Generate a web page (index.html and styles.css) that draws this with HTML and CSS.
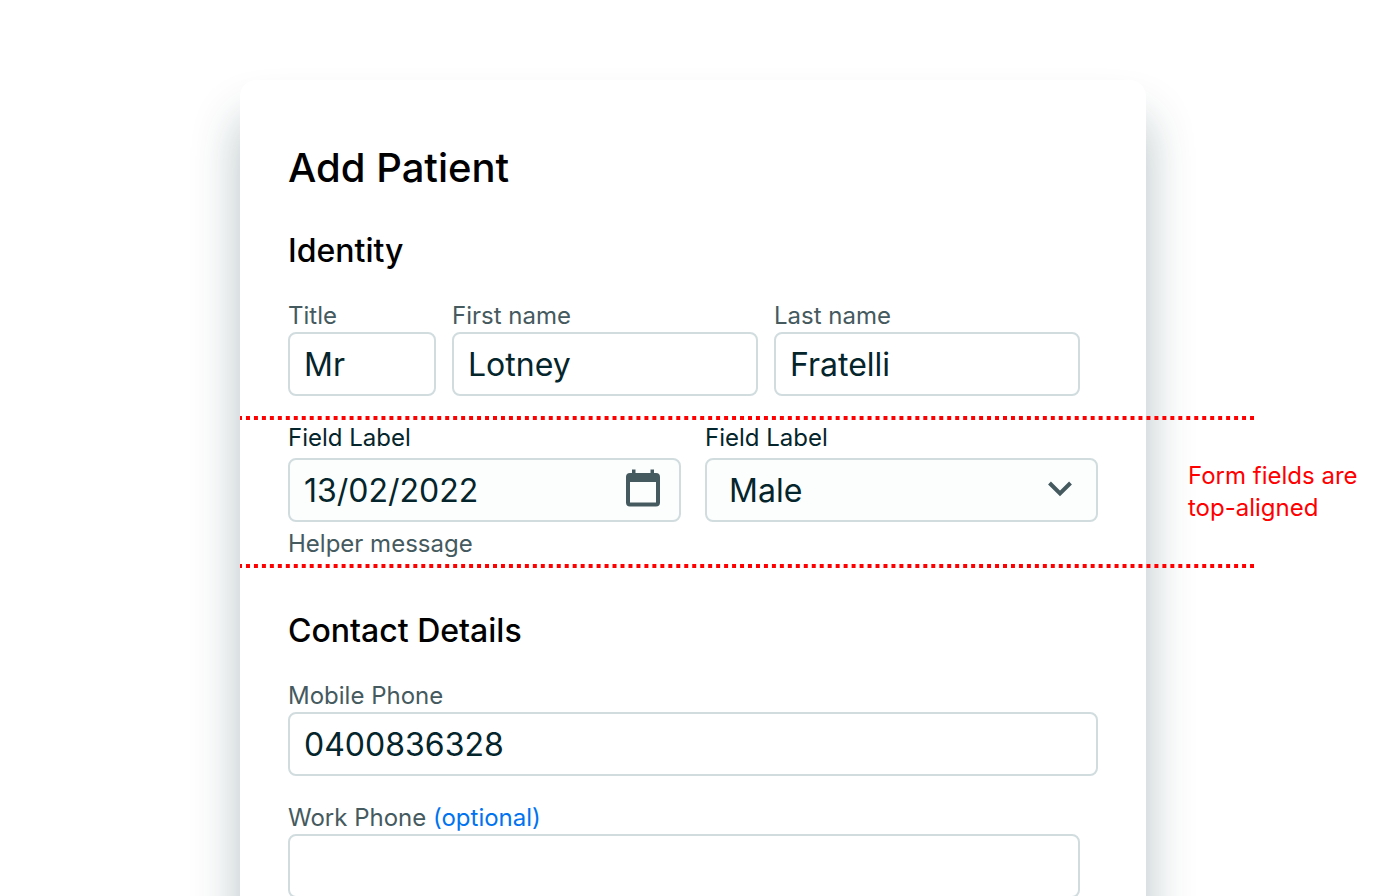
FILE: index.html
```
<!DOCTYPE html>
<html lang="en">
<head>
  <meta charset="UTF-8" />
  <meta name="viewport" content="width=device-width, initial-scale=1" />
  <title>Add Patient</title>
  <link rel="stylesheet" href="styles.css">
</head>
<body>

  <main class="card">
    <h1>Add Patient</h1>

    <form>
      <h2>Identity</h2>
      <div class="row name-row">
        <div class="field">
          <label for="title">Title</label>
          <input type="text" id="title" value="Mr">
        </div>
        <div class="field">
          <label for="first-name">First name</label>
          <input type="text" id="first-name" value="Lotney">
        </div>
        <div class="field">
          <label for="last-name">Last name</label>
          <input type="text" id="last-name" value="Fratelli">
        </div>
      </div>

      <!-- fields between the guide lines -->
      <div class="guides">
        <div class="row guide-row">
          <div class="field">
            <label for="dob">Field Label</label>
            <div class="control">
              <input type="text" id="dob" value="13/02/2022" aria-describedby="dob-help">
              <button type="button" class="calendar" aria-label="Choose date">
                <svg width="36" height="38" viewBox="0 0 36 38" fill="#455a5e">
                  <path fill-rule="evenodd" d="M7 .5h3.500V4h15V.5H29V4h2a4 4 0 0 1 4 4v25.500a4 4 0 0 1-4 4H5a4 4 0 0 1-4-4V8a4 4 0 0 1 4-4h2zM5 13v20.500h26V13z"/>
                </svg>
              </button>
            </div>
            <p class="helper" id="dob-help">Helper message</p>
          </div>
          <div class="field">
            <label for="gender">Field Label</label>
            <div class="control">
              <select id="gender">
                <option>Male</option>
                <option>Female</option>
              </select>
              <svg class="chevron" width="24" height="16" viewBox="0 0 24 16" fill="none" stroke="#455a5e" stroke-width="4">
                <path d="M1.500 2L12 12.500 22.500 2"/>
              </svg>
            </div>
          </div>
        </div>
        <p class="note">Form fields are top-aligned</p>
      </div>

      <h2>Contact Details</h2>
      <div class="field">
        <label for="mobile">Mobile Phone</label>
        <input type="tel" id="mobile" value="0400836328">
      </div>
      <div class="field work">
        <label for="work">Work Phone <span class="optional">(optional)</span></label>
        <input type="tel" id="work">
      </div>
    </form>
  </main>

</body>
</html>
```

FILE: styles.css
```
* {
  box-sizing: border-box;
}

html {
  overflow: hidden;
}

body {
  margin: 0;
  padding: 80px 240px 0;
  background: #fff;
  color: #000;
  font-family: Inter, sans-serif;
}

.card {
  min-height: 100vh;
  padding: 64px 48px 96px;
  background: #fff;
  border-radius: 16px;
  box-shadow: 0 38px 48px rgba(12, 52, 62, 0.3);
}

h1, h2, p {
  margin: 0;
}

h1 {
  margin-bottom: 40px;
  font-size: 40px;
  line-height: 48px;
  font-weight: 500;
}

h2 {
  margin-bottom: 30px;
  font-size: 32px;
  line-height: 38px;
  font-weight: 500;
}

.row {
  display: grid;
}

.name-row {
  grid-template-columns: 148px 1fr 1fr;
  gap: 16px;
  margin-right: 18px;
}

.field {
  min-width: 0;
}

label {
  display: block;
  color: #455a5e;
  font-size: 24px;
  line-height: 32px;
}

input, select {
  display: block;
  width: 100%;
  height: 64px;
  padding: 0 14px;
  border: 2px solid #d1dcde;
  border-radius: 8px;
  background: #fff;
  color: #04252b;
  font-family: inherit;
  font-size: 32px;
}

/* dotted lines run past the right edge of the card */
.guides {
  position: relative;
  margin: 20px -156px 44px -48px;
  padding: 6px 156px 8px 48px;
}

.guides::before,
.guides::after {
  content: "";
  position: absolute;
  left: 0;
  right: 0;
  height: 4px;
  background-image: linear-gradient(90deg, #f00 25%, transparent 25% 75%, #f00 75%);
  background-size: 8px 4px;
  background-repeat: round no-repeat;
}

.guides::before {
  top: 0;
}

.guides::after {
  bottom: 0;
}

.guide-row {
  grid-template-columns: 1fr 1fr;
  gap: 24px;
}

.guide-row label {
  margin-bottom: 4px;
  color: #04252b;
}

.guide-row input,
.guide-row select {
  background: #fcfefe;
}

.control {
  position: relative;
}

select {
  padding-left: 22px;
  appearance: none;
}

.calendar {
  position: absolute;
  top: 11px;
  right: 20px;
  padding: 0;
  border: 0;
  background: none;
}

.calendar svg {
  display: block;
}

.chevron {
  position: absolute;
  top: 23px;
  right: 26px;
  pointer-events: none;
}

.helper {
  margin-top: 6px;
  color: #455a5e;
  font-size: 24px;
  line-height: 32px;
}

.note {
  position: absolute;
  top: 44px;
  left: calc(100% - 66px);
  width: 180px;
  color: #f00;
  font-size: 24px;
  line-height: 32px;
}

.work {
  margin-top: 26px;
}

.work input {
  width: calc(100% - 18px);
}

.optional {
  color: #0073f0;
}
```
